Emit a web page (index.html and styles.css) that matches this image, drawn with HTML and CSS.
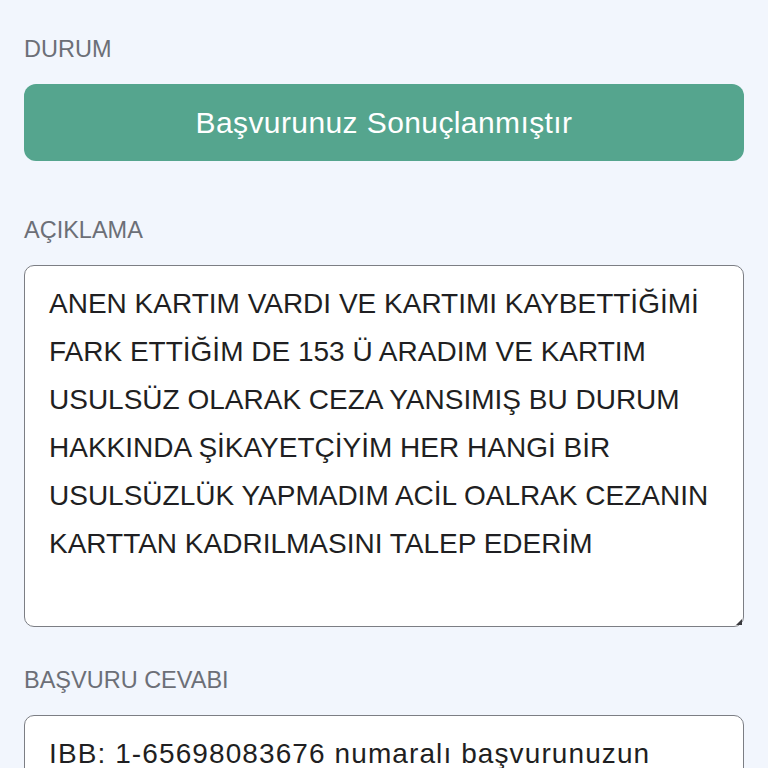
FILE: index.html
```html
<!DOCTYPE html>
<html lang="tr">
<head>
    <meta charset="UTF-8">
    <meta name="viewport" content="width=device-width, initial-scale=1.0">
    <title>Başvuru Detayı</title>
    <link rel="stylesheet" href="styles.css">
</head>
<body>
    <div class="container">
        <div class="field status-field">
            <div class="label">DURUM</div>
            <div class="status">Başvurunuz Sonuçlanmıştır</div>
        </div>

        <div class="field">
            <div class="label">AÇIKLAMA</div>
            <div class="textbox description">ANEN KARTIM VARDI VE KARTIMI KAYBETTİĞİMİ FARK ETTİĞİM DE 153 Ü ARADIM VE KARTIM USULSÜZ OLARAK CEZA YANSIMIŞ BU DURUM HAKKINDA ŞİKAYETÇİYİM HER HANGİ BİR USULSÜZLÜK YAPMADIM ACİL OALRAK CEZANIN KARTTAN KADRILMASINI TALEP EDERİM</div>
        </div>

        <div class="field">
            <div class="label">BAŞVURU CEVABI</div>
            <div class="textbox answer">IBB: 1-65698083676 numaralı başvurunuzun</div>
        </div>
    </div>
</body>
</html>
```

FILE: styles.css
```css
body {
    font-family: "Liberation Sans", Arial, sans-serif;
    margin: 0;
    padding: 0;
    background-color: #f2f6fd;
    color: #1f1f22;
}

.container {
    padding: 34px 24px 0;
}

.field {
    margin-bottom: 38px;
}

.status-field {
    margin-bottom: 54px;
}

.label {
    font-size: 23.5px;
    line-height: 30px;
    color: #6c6f77;
    margin-bottom: 20px;
}

.status {
    background-color: #55a58e;
    color: #fff;
    border-radius: 12px;
    height: 77px;
    display: flex;
    align-items: center;
    justify-content: center;
    font-size: 30px;
    letter-spacing: 0.4px;
}

.textbox {
    position: relative;
    background-color: #fff;
    border: 1px solid #7c7e84;
    border-radius: 10px;
    padding: 14px 24px;
    font-size: 28px;
    line-height: 48px;
    box-sizing: border-box;
}

.description {
    height: 362px;
}

.description::after {
    content: "";
    position: absolute;
    right: 1px;
    bottom: 1px;
    border-left: 6px solid transparent;
    border-bottom: 6px solid #3a3a3e;
}

.answer {
    min-height: 200px;
    letter-spacing: 1.1px;
}
```
